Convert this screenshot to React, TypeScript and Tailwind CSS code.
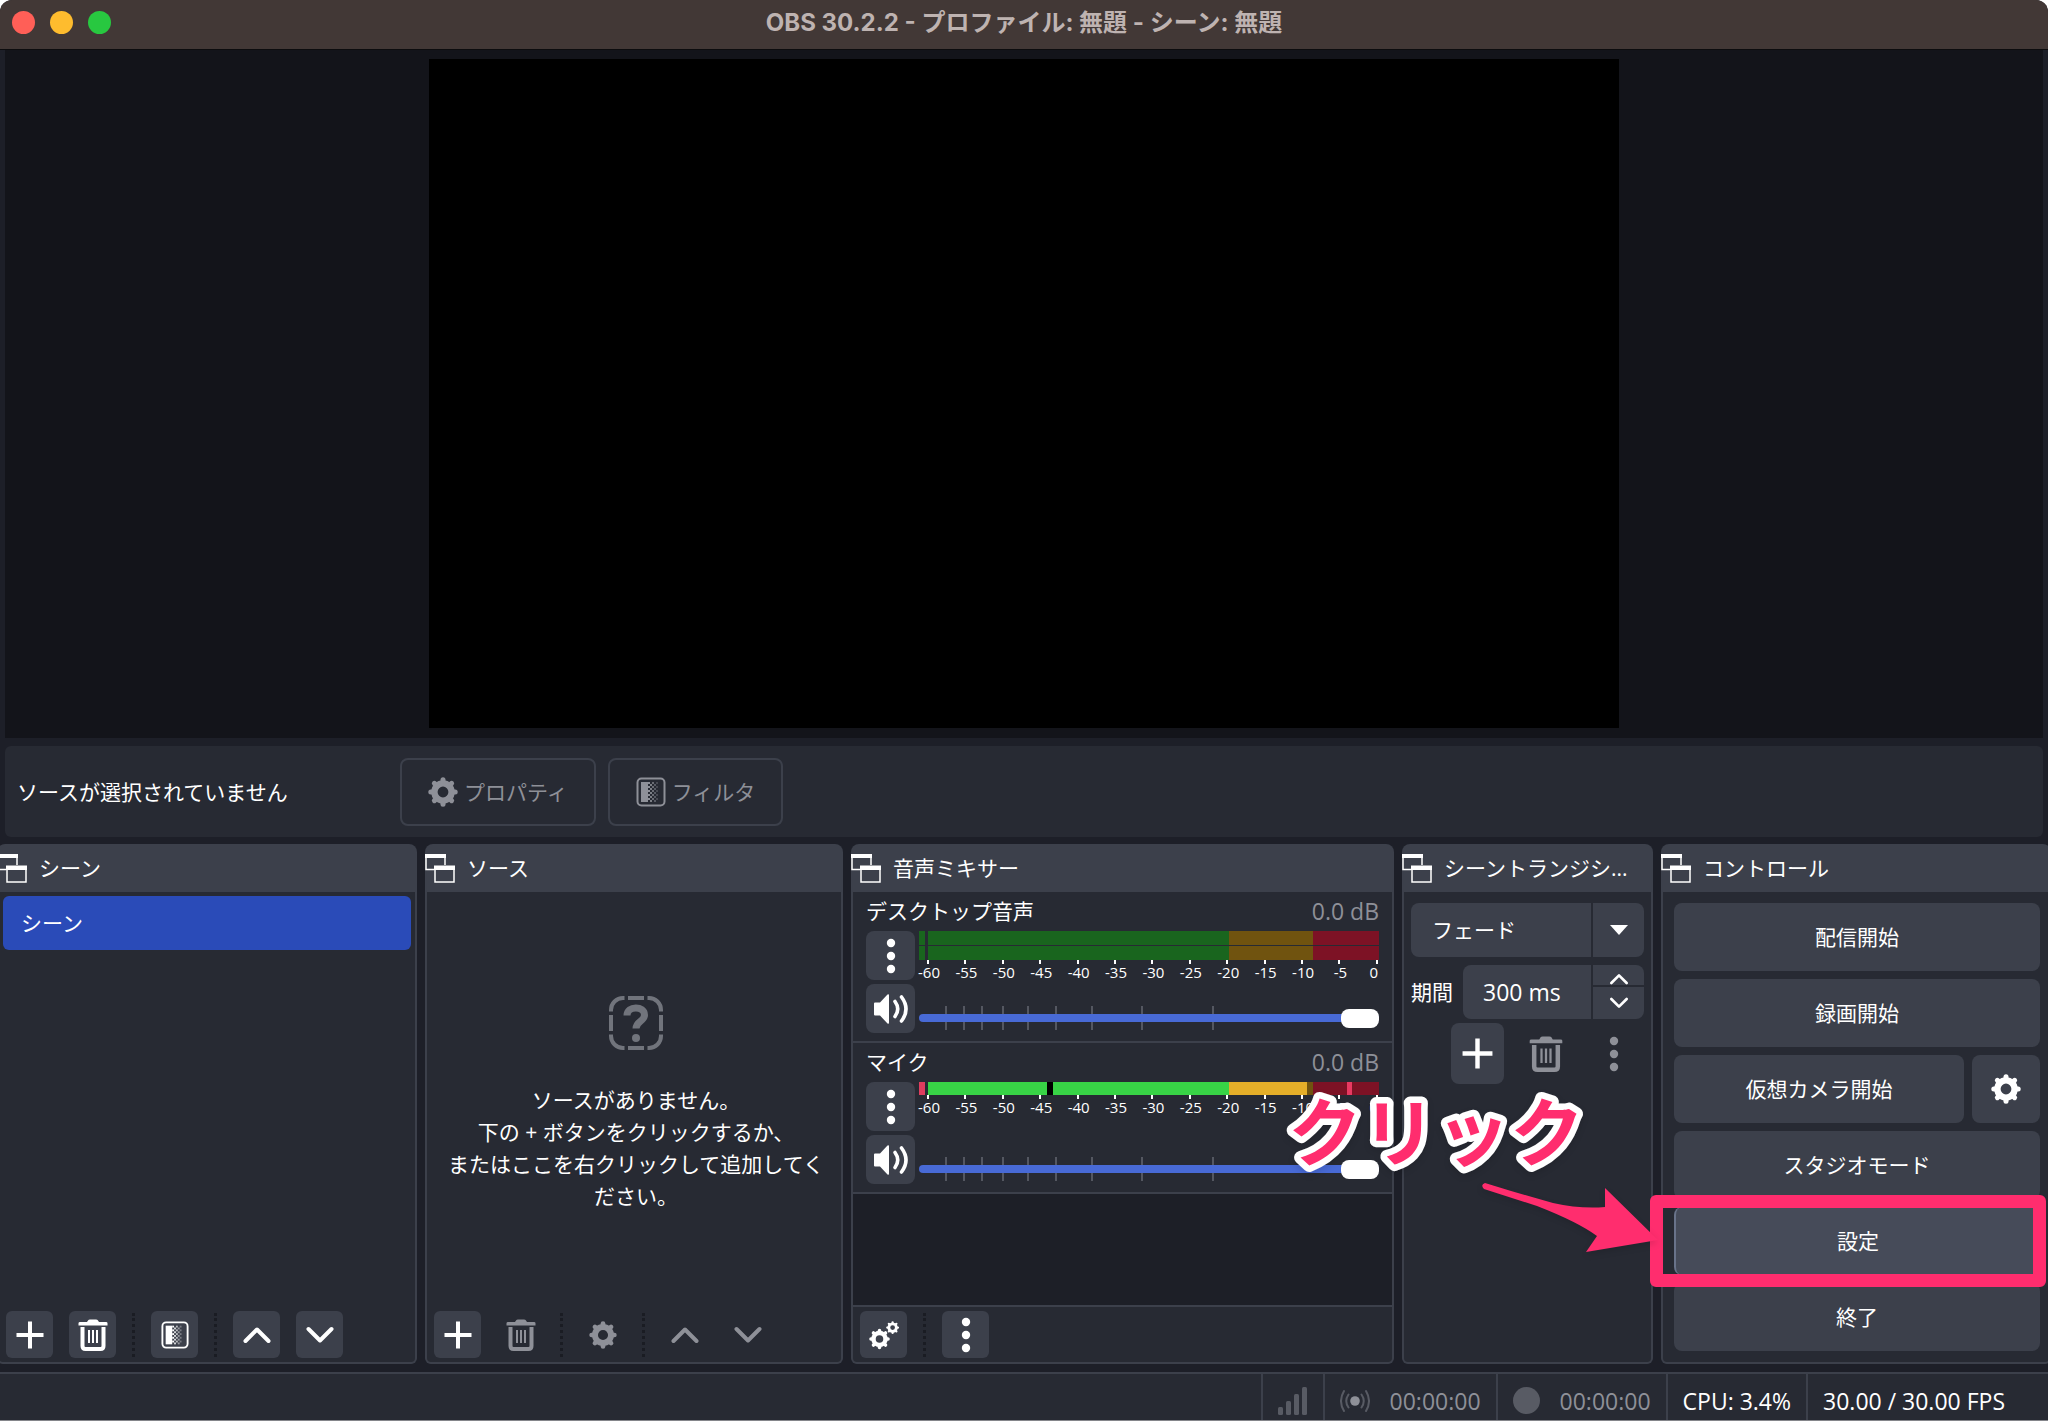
import { useState } from "react";
import type { ReactNode } from "react";

const SCALE = [-60, -55, -50, -45, -40, -35, -30, -25, -20, -15, -10, -5, 0];

// Fader detents, as a percentage of the slider width.
const DETENTS = [5.7, 9.5, 13.5, 18.1, 23.5, 29.6, 37.4, 48.2, 63.8];

interface IconProps {
  className?: string;
}

function PlusIcon({ className = "size-7" }: IconProps) {
  return (
    <svg viewBox="0 0 28 28" className={className} fill="none" stroke="currentColor" strokeWidth="4">
      <path d="M14 .5v27M.5 14h27" />
    </svg>
  );
}

function TrashIcon({ className = "h-8 w-[30px]" }: IconProps) {
  return (
    <svg viewBox="0 0 30 32" className={className} fill="none" stroke="currentColor">
      <path d="M.5 6.5V4.2Q.5 3 2 3H9l1.2-1.8Q10.6.5 12 .5h6q1.4 0 1.8.7L21 3h7q1.5 0 1.5 1.2v2.3z" fill="currentColor" stroke="none" />
      <path d="M4.5 8v19q0 3 3 3h15q3 0 3-3V8" strokeWidth="4" />
      <path d="M11 11v13M15 11v13M19 11v13" strokeWidth="2" />
    </svg>
  );
}

function ChevronIcon({ up = false, className = "h-[18px] w-7" }: IconProps & { up?: boolean }) {
  return (
    <svg viewBox="0 0 28 18" className={className} fill="none" stroke="currentColor" strokeWidth="4" strokeLinecap="round" strokeLinejoin="round">
      <path d={up ? "M2.5 15 14 3.5 25.5 15" : "M2.5 3 14 14.5 25.5 3"} />
    </svg>
  );
}

function GearShape() {
  return (
    <>
      <circle cx="15" cy="15" r="8.6" strokeWidth="6.4" />
      {[0, 45, 90, 135, 180, 225, 270, 315].map((a) => (
        <path key={a} d="M15 4.5V2.8" strokeWidth="5" strokeLinecap="round" transform={`rotate(${a} 15 15)`} />
      ))}
    </>
  );
}

function GearIcon({ className = "size-7" }: IconProps) {
  return (
    <svg viewBox="0 0 30 30" className={className} fill="none" stroke="currentColor">
      <GearShape />
    </svg>
  );
}

function GearsIcon() {
  return (
    <svg viewBox="0 0 30 30" className="size-[30px]" fill="none" stroke="currentColor">
      <g transform="translate(0 8.5) scale(.7)">
        <GearShape />
      </g>
      <g transform="translate(17 1) scale(.44)">
        <GearShape />
      </g>
    </svg>
  );
}

function FilterIcon({ className = "size-7" }: IconProps) {
  const dots: ReactNode[] = [];
  for (let r = 0; r < 10; r++) {
    for (let c = 0; c < 5; c++) {
      if ((r + c) % 2 === 0) {
        dots.push(<rect key={`${r}-${c}`} x={12 + c * 2} y={5 + r * 2} width="2" height="2" opacity={1 - c * 0.17} />);
      }
    }
  }
  return (
    <svg viewBox="0 0 30 30" className={className} fill="currentColor">
      <rect x="1.5" y="1.5" width="27" height="27" rx="4" fill="none" stroke="currentColor" strokeWidth="2" />
      <rect x="5" y="5" width="7" height="20" />
      {dots}
    </svg>
  );
}

function DotsIcon() {
  return (
    <svg viewBox="0 0 10 36" className="h-9 w-2.5" fill="currentColor">
      <circle cx="5" cy="5" r="4.2" />
      <circle cx="5" cy="18" r="4.2" />
      <circle cx="5" cy="31" r="4.2" />
    </svg>
  );
}

function SpeakerIcon() {
  return (
    <svg viewBox="0 0 36 32" className="h-8 w-9" fill="none" stroke="currentColor" strokeLinecap="round">
      <path d="M1 10.5Q1 9.5 2 9.5H7L14.5 1.5Q16 .5 16 2.5v27q0 2-1.5 1L7 22.5H2q-1 0-1-1z" fill="currentColor" stroke="none" />
      <path d="M22 8.5q5.5 7.5 0 15" strokeWidth="3.6" />
      <path d="M28.5 4q9 12 0 24" strokeWidth="3.6" />
    </svg>
  );
}

function FloatIcon() {
  return (
    <svg viewBox="0 0 30 30" className="size-[30px] shrink-0" fill="none" stroke="currentColor" strokeWidth="1.5">
      <path d="M1 3v13.5h8M20 3v9" />
      <path d="M0 1h21v4H0zM9 12.5h21V17H9z" fill="currentColor" stroke="none" />
      <path d="M10 14v15h19V14" />
    </svg>
  );
}

function EmptyIcon() {
  return (
    <svg viewBox="0 0 54 54" className="size-[54px] text-[#71747c]" fill="none" stroke="currentColor" strokeWidth="4">
      <path d="M2 15.5V14A12 12 0 0 1 14 2h1.5M38.5 2H40a12 12 0 0 1 12 12v1.5M52 38.5V40a12 12 0 0 1-12 12h-1.5M15.5 52H14A12 12 0 0 1 2 40v-1.5" />
      <path d="M19 2h16M19 52h16M2 19v16M52 19v16" />
      <path d="M18 19.5c0-10 17.5-10 17.5-.5 0 6.5-8.5 6-8.5 13.500" strokeWidth="7" />
      <circle cx="27" cy="42" r="4" fill="currentColor" stroke="none" />
    </svg>
  );
}

function Dock({ title, children }: { title: string; children: ReactNode }) {
  return (
    <section className="flex min-w-0 flex-col rounded-lg bg-[#3c404b]">
      <header className="flex h-12 items-center gap-3 pr-4">
        <FloatIcon />
        <h2 className="truncate">{title}</h2>
      </header>
      <div className="flex flex-1 flex-col rounded-b-md border-x-2 border-b-2 border-[#3c404b] bg-[#272a33]">{children}</div>
    </section>
  );
}

interface ToolProps {
  label: string;
  dim?: boolean;
  children: ReactNode;
}

function Tool({ label, dim, children }: ToolProps) {
  return (
    <button
      type="button"
      aria-label={label}
      disabled={dim}
      className="flex size-[47px] items-center justify-center rounded-md bg-[#3c404b] disabled:bg-transparent disabled:text-[#8e9098]"
    >
      {children}
    </button>
  );
}

function ToolSeparator() {
  return <div className="h-11 border-l-3 border-dotted border-[#1a1c23]" />;
}

function Toolbar({ children }: { children: ReactNode }) {
  return <div className="flex items-center gap-4 px-[7px] pb-1 pt-1">{children}</div>;
}

function DesktopMeter() {
  return (
    <div className="flex flex-col gap-px">
      {[0, 1].map((ch) => (
        <div key={ch} className="flex h-3.5">
          <div className="mr-[3px] w-1.5 bg-[#19651e]" />
          <div className="flex-[301] bg-[#19651e]" />
          <div className="flex-[84] bg-[#70530f]" />
          <div className="flex-[66] bg-[#7d1225]" />
        </div>
      ))}
    </div>
  );
}

function MicMeter() {
  return (
    <div className="flex h-[13px]">
      <div className="mr-[3px] w-1.5 bg-[#de3d5e]" />
      <div className="flex-[119] bg-[#38d346]" />
      <div className="w-1.5 bg-black" />
      <div className="flex-[176] bg-[#38d346]" />
      <div className="flex-[78] bg-[#e4ae29]" />
      <div className="flex-[6] bg-[#70530f]" />
      <div className="flex-[34] bg-[#7d1225]" />
      <div className="w-[5px] bg-[#e83a62]" />
      <div className="flex-[27] bg-[#7d1225]" />
    </div>
  );
}

function Channel({ name, meter }: { name: string; meter: ReactNode }) {
  const [volume, setVolume] = useState(100);
  return (
    <div className="border-b-2 border-[#3c404b] px-[13px] pb-2 pt-0.5">
      <div className="mb-1 flex h-[33px] items-center justify-between">
        <span>{name}</span>
        <span className="text-[23px] text-[#8e9098]">0.0 dB</span>
      </div>
      <div className="flex gap-1">
        <div className="flex flex-col gap-1">
          <button type="button" aria-label={`${name} のオプション`} className="flex size-[49px] items-center justify-center rounded-lg bg-[#3c404b]">
            <DotsIcon />
          </button>
          <button type="button" aria-label={`${name} をミュート`} className="flex size-[49px] items-center justify-center rounded-lg bg-[#3c404b]">
            <SpeakerIcon />
          </button>
        </div>
        <div className="flex flex-1 flex-col">
          {meter}
          <div className="ml-[9px] mr-0.5 flex justify-between text-[15px] leading-4">
            {SCALE.map((db) => (
              <div key={db} className="flex w-0 flex-col items-center">
                <div className="h-1 w-0.5 bg-white" />
                <span className={db === 0 ? "pr-1.5" : "pl-0.5"}>{db}</span>
              </div>
            ))}
          </div>
          <div className="relative mb-[3px] mt-auto h-6">
            {DETENTS.map((p) => (
              <div key={p} className="absolute top-0 h-6 w-0.5 bg-[#545761]" style={{ left: `${p}%` }} />
            ))}
            <input
              type="range"
              aria-label={`${name} の音量`}
              value={volume}
              onChange={(e) => setVolume(Number(e.target.value))}
              className="relative block h-6 w-full appearance-none bg-transparent [&::-webkit-slider-runnable-track]:h-2 [&::-webkit-slider-runnable-track]:rounded-full [&::-webkit-slider-runnable-track]:bg-[#486ad6] [&::-webkit-slider-thumb]:-mt-[5px] [&::-webkit-slider-thumb]:h-[19px] [&::-webkit-slider-thumb]:w-[38px] [&::-webkit-slider-thumb]:appearance-none [&::-webkit-slider-thumb]:rounded-lg [&::-webkit-slider-thumb]:bg-white"
            />
          </div>
        </div>
      </div>
    </div>
  );
}

function ControlButton({ children }: { children: ReactNode }) {
  return (
    <button type="button" className="min-h-[68px] flex-1 rounded-lg bg-[#3c404b]">
      {children}
    </button>
  );
}

// "Click here" caption and the arrow below it, drawn over the neighbouring docks.
function Callout() {
  return (
    <svg viewBox="0 0 390 180" className="pointer-events-none absolute -left-[390px] -top-[130px] h-[180px] w-[390px] overflow-visible drop-shadow-md" fill="#ff2d6e">
      <text
        x="4"
        y="83"
        fontSize="74"
        fontWeight="700"
        stroke="white"
        strokeWidth="13"
        strokeLinejoin="round"
        paintOrder="stroke"
      >
        クリック
      </text>
      <path
        transform="translate(196 102)"
        d="M5 4Q40 15 73 24q27 6 52 4V9l53 52-72 12 11-16Q98 43 57 27L4 10Q0 6 5 4z"
      />
    </svg>
  );
}

function SettingsButton() {
  return (
    <div className="relative flex">
      <button type="button" className="h-[68px] flex-1 rounded-lg border-l-2 border-[#69738a] bg-[#464b59]">
        設定
      </button>
      <div className="pointer-events-none absolute -bottom-3 -left-6 -right-1.5 -top-3 rounded-md border-[13px] border-[#ff2d6e]" />
      <Callout />
    </div>
  );
}

function StatusCell({ children }: { children: ReactNode }) {
  return <div className="flex items-center border-l-2 border-[#3c404b] px-[15px] pt-[7px]">{children}</div>;
}

export default function App() {
  const [transition, setTransition] = useState("fade");
  const [duration, setDuration] = useState(300);

  return (
    <div className="flex h-screen min-h-[900px] flex-col overflow-hidden rounded-t-xl bg-[#1d1f28] font-['Open_Sans','Noto_Sans_CJK_JP',sans-serif] text-[21px] leading-8 text-white">
      <header className="grid h-[50px] shrink-0 grid-cols-[1fr_auto_1fr] items-center border-b border-[#0c0c0e] bg-[#423836] px-3 pb-1">
        <div className="flex gap-[15px]">
          <button type="button" aria-label="閉じる" className="size-[23px] rounded-full bg-[#ff5f57]" />
          <button type="button" aria-label="しまう" className="size-[23px] rounded-full bg-[#febc2e]" />
          <button type="button" aria-label="拡大" className="size-[23px] rounded-full bg-[#28c840]" />
        </div>
        <h1 className="font-['Inter','Noto_Sans_CJK_JP',sans-serif] text-[24px] font-bold text-[#beb3b1]">
          OBS 30.2.2 - プロファイル: 無題 - シーン: 無題
        </h1>
      </header>

      <main className="mx-[5px] flex min-h-0 flex-1 justify-center bg-[#13141a] pb-2.5 pt-[9px]">
        <div className="aspect-video h-full bg-black" />
      </main>

      <div className="mx-[5px] mt-2 flex h-[91px] shrink-0 items-center gap-3 rounded-md bg-[#272a33] pl-3">
        <p className="w-[371px]">ソースが選択されていません</p>
        <button type="button" disabled className="flex h-[68px] items-center gap-1.5 rounded-lg border-2 border-[#3c404b] px-[26px] text-[#8e9098]">
          <GearIcon className="size-[30px]" />
          プロパティ
        </button>
        <button type="button" disabled className="flex h-[68px] items-center gap-1.5 rounded-lg border-2 border-[#3c404b] px-[26px] text-[#8e9098]">
          <FilterIcon className="size-[30px]" />
          フィルタ
        </button>
      </div>

      <div className="-mx-[3px] mt-[7px] grid shrink-0 grid-cols-[420fr_418fr_543fr_251fr_390fr] gap-2">
        <Dock title="シーン">
          <ul className="flex-1 px-1 pt-1">
            <li className="flex h-[54px] items-center rounded-md bg-[#2a4bb8] px-[18px]">シーン</li>
          </ul>
          <Toolbar>
            <Tool label="シーンを追加">
              <PlusIcon />
            </Tool>
            <Tool label="シーンを削除">
              <TrashIcon />
            </Tool>
            <ToolSeparator />
            <Tool label="シーンフィルタ">
              <FilterIcon />
            </Tool>
            <ToolSeparator />
            <Tool label="上へ">
              <ChevronIcon up />
            </Tool>
            <Tool label="下へ">
              <ChevronIcon />
            </Tool>
          </Toolbar>
        </Dock>

        <Dock title="ソース">
          <div className="flex flex-1 flex-col items-center justify-center gap-[34px] pl-1 pt-2">
            <EmptyIcon />
            <p className="whitespace-nowrap text-center">
              ソースがありません。
              <br />
              下の + ボタンをクリックするか、
              <br />
              またはここを右クリックして追加してく
              <br />
              ださい。
            </p>
          </div>
          <Toolbar>
            <Tool label="ソースを追加">
              <PlusIcon />
            </Tool>
            <Tool label="ソースを削除" dim>
              <TrashIcon />
            </Tool>
            <ToolSeparator />
            <Tool label="ソースのプロパティ" dim>
              <GearIcon />
            </Tool>
            <ToolSeparator />
            <Tool label="上へ" dim>
              <ChevronIcon up />
            </Tool>
            <Tool label="下へ" dim>
              <ChevronIcon />
            </Tool>
          </Toolbar>
        </Dock>

        <Dock title="音声ミキサー">
          <Channel name="デスクトップ音声" meter={<DesktopMeter />} />
          <Channel name="マイク" meter={<MicMeter />} />
          <div className="flex-1 border-b-2 border-[#3c404b] bg-[#1d1f27]" />
          <Toolbar>
            <Tool label="オーディオの詳細プロパティ">
              <GearsIcon />
            </Tool>
            <ToolSeparator />
            <Tool label="音声ミキサーメニュー">
              <DotsIcon />
            </Tool>
          </Toolbar>
        </Dock>

        <Dock title="シーントランジシ...">
          <div className="flex flex-col gap-2 px-[7px] pt-[11px]">
            <div className="relative">
              <select
                aria-label="シーントランジション"
                value={transition}
                onChange={(e) => setTransition(e.target.value)}
                className="h-[54px] w-full appearance-none rounded-lg bg-[#3c404b] pl-[21px]"
              >
                <option value="fade">フェード</option>
                <option value="cut">カット</option>
              </select>
              <div className="pointer-events-none absolute inset-y-0 right-0 flex w-[53px] items-center justify-center border-l-2 border-[#272a33]">
                <svg viewBox="0 0 18 10" className="h-2.5 w-[18px]" fill="currentColor">
                  <path d="M0 0h18L9 10z" />
                </svg>
              </div>
            </div>

            <div className="flex items-center gap-2.5">
              <label htmlFor="duration" className="shrink-0">
                期間
              </label>
              <div className="flex h-[54px] min-w-0 flex-1 rounded-lg bg-[#3c404b]">
                <input
                  id="duration"
                  value={`${duration} ms`}
                  onChange={(e) => setDuration(parseInt(e.target.value) || 0)}
                  className="w-0 flex-1 bg-transparent pl-5 text-[23px] outline-none"
                />
                <div className="flex w-[53px] flex-col border-l-2 border-[#272a33]">
                  <button type="button" aria-label="増やす" onClick={() => setDuration(duration + 50)} className="flex flex-1 items-end justify-center border-b-2 border-[#272a33]">
                    <ChevronIcon up className="h-3 w-5" />
                  </button>
                  <button type="button" aria-label="減らす" onClick={() => setDuration(duration - 50)} className="flex h-8 items-center justify-center">
                    <ChevronIcon className="h-3 w-5" />
                  </button>
                </div>
              </div>
            </div>
          </div>
          <div className="mr-[11px] mt-1 flex justify-end gap-[15px]">
            <button type="button" aria-label="トランジションを追加" className="flex h-[61px] w-[53px] items-center justify-center rounded-lg bg-[#3c404b]">
              <PlusIcon className="size-[31px]" />
            </button>
            <button type="button" aria-label="トランジションを削除" disabled className="flex h-[61px] w-[53px] items-center justify-center text-[#8e9098]">
              <TrashIcon className="h-9 w-[34px]" />
            </button>
            <button type="button" aria-label="トランジションのプロパティ" disabled className="flex h-[61px] w-[53px] items-center justify-center text-[#8e9098]">
              <DotsIcon />
            </button>
          </div>
        </Dock>

        <Dock title="コントロール">
          <div className="flex flex-col gap-2 py-[11px] pl-[11px] pr-[9px]">
            <ControlButton>配信開始</ControlButton>
            <ControlButton>録画開始</ControlButton>
            <div className="flex gap-2">
              <ControlButton>仮想カメラ開始</ControlButton>
              <button type="button" aria-label="仮想カメラの設定" className="flex size-[68px] items-center justify-center rounded-lg bg-[#3c404b]">
                <GearIcon className="size-[30px]" />
              </button>
            </div>
            <ControlButton>スタジオモード</ControlButton>
            <SettingsButton />
            <ControlButton>終了</ControlButton>
          </div>
        </Dock>
      </div>

      <footer className="mt-2 flex h-[49px] shrink-0 justify-end border-b border-t-2 border-b-[#85868b] border-t-[#3c404b] bg-[#272a33] pr-7 text-[23px]">
        <StatusCell>
          <svg viewBox="0 0 30 28" className="h-7 w-[30px] text-[#585b64]" fill="currentColor">
            <rect x="0" y="20" width="5" height="8" rx="1.5" />
            <rect x="8" y="14" width="5" height="14" rx="1.5" />
            <rect x="16" y="7" width="5" height="21" rx="1.5" />
            <rect x="24" y="0" width="5" height="28" rx="1.5" />
          </svg>
        </StatusCell>
        <StatusCell>
          <div className="flex items-center gap-5 text-[#8e9098]">
            <svg viewBox="0 0 30 26" className="h-[26px] w-[30px]" fill="none" stroke="#585b64" strokeWidth="2" strokeLinecap="round">
              <circle cx="15" cy="13" r="4.8" fill="#8e9098" stroke="none" />
              <path d="M8.5 6.5q-4.5 6.5 0 13M21.5 6.5q4.5 6.5 0 13M4 3q-6 10 0 20M26 3q6 10 0 20" />
            </svg>
            00:00:00
          </div>
        </StatusCell>
        <StatusCell>
          <div className="flex items-center gap-5 text-[#8e9098]">
            <div className="size-[27px] rounded-full bg-[#585b64]" />
            00:00:00
          </div>
        </StatusCell>
        <StatusCell>CPU: 3.4%</StatusCell>
        <StatusCell>30.00 / 30.00 FPS</StatusCell>
      </footer>
    </div>
  );
}
